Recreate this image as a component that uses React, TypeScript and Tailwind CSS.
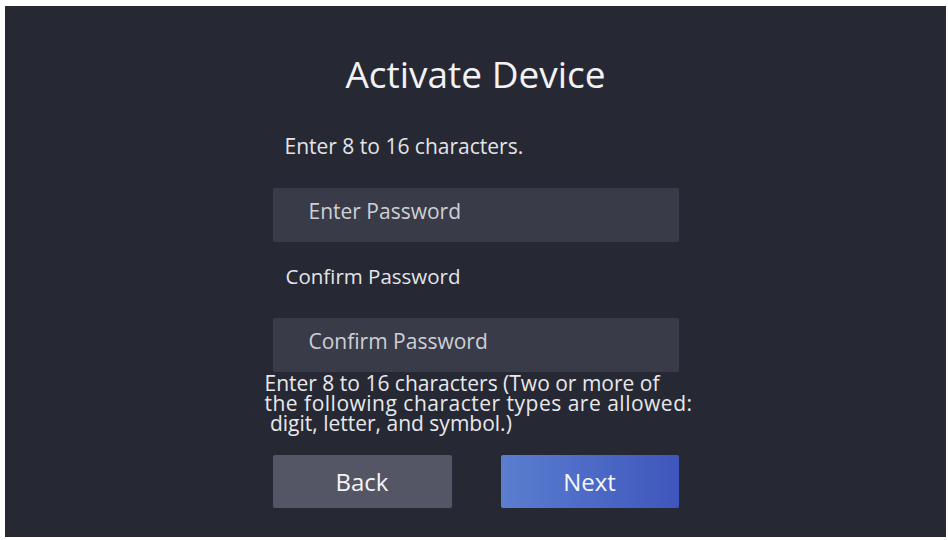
export default function App() {
  return (
    <div className="flex h-[540px] w-[948px] flex-col bg-white pb-[3px] pl-[5px] pr-[2px] pt-[6px]" style={{ fontFamily: '"Open Sans", "Noto Sans", sans-serif' }}>
      <div className="flex flex-1 flex-col items-center bg-[#262833] text-[#e4e4e8]">
        <div className="flex w-[406px] flex-col">
          <h1 className="mt-[44px] text-center text-[37px] leading-[48px] text-[#f2f2f4]">Activate Device</h1>
          <p className="ml-[12px] mt-[35px] text-[21px] leading-[26px]">Enter 8 to 16 characters.</p>
          <div className="mt-[29px] flex h-[54px] items-center rounded-[2px] bg-[#3a3b48] pb-[7px] pl-[36px] text-[21px] text-[#cfd0d6]">Enter Password</div>
          <p className="ml-[13px] mt-[21px] text-[20.5px] leading-[26px]">Confirm Password</p>
          <div className="mt-[29px] flex h-[54px] items-center rounded-[2px] bg-[#3a3b48] pb-[6px] pl-[36px] text-[21px] text-[#cfd0d6]">Confirm Password</div>
          <p className="-ml-[8px] mt-[1px] w-[450px] text-[21px] leading-[20px] text-[#e8e8ec]">
            Enter 8 to 16 characters (Two or more of
            <br />
            <span className="tracking-[0.5px]">the following character types are allowed:</span>
            <br />
            &nbsp;digit, letter, and symbol.)
          </p>
          <div className="mt-[22px] flex justify-between">
            <button type="button" className="h-[53px] w-[179px] rounded-[2px] bg-[#545565] text-[24px] text-[#f4f4f6]">Back</button>
            <button type="button" className="h-[53px] w-[178px] rounded-[2px] bg-gradient-to-r from-[#5b7ed0] to-[#3f56bc] text-[24px] text-[#f4f6fb]">Next</button>
          </div>
        </div>
      </div>
    </div>
  )
}
